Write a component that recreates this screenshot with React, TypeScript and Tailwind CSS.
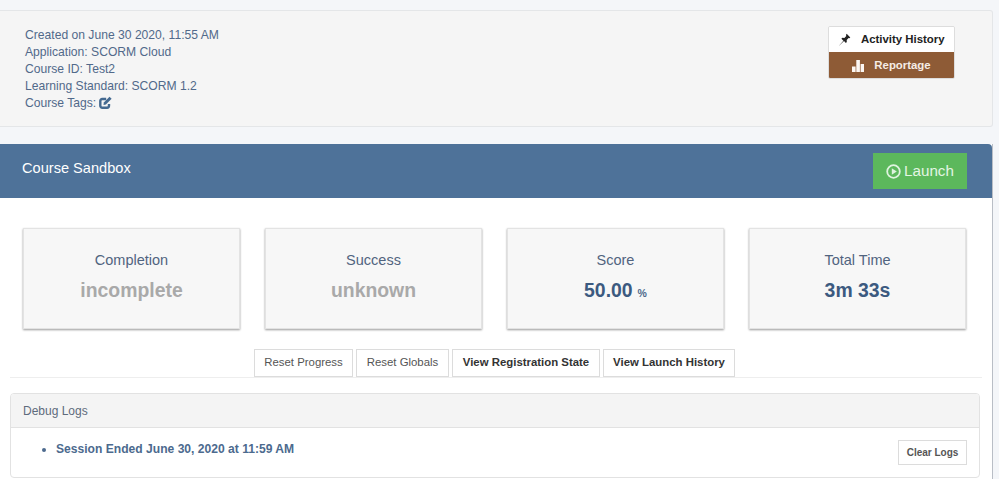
import React from "react";

const stats = [
  { label: "Completion", value: "incomplete", muted: true },
  { label: "Success", value: "unknown", muted: true },
  { label: "Score", value: "50.00", unit: "%" },
  { label: "Total Time", value: "3m 33s" },
];

const TagIcon = () => (
  <svg width="13" height="13" viewBox="0 0 13 13" fill="none" className="ml-[3px] mt-[-3px]">
    <path d="M10 8v1.800a1.900 1.900 0 0 1-1.900 1.900H3.200a1.900 1.900 0 0 1-1.900-1.900V4.900A1.900 1.900 0 0 1 3.200 3h4" stroke="#456a91" strokeWidth="2.400" />
    <path d="M4.800 6.400 10.500.7l2.100 2.100-5.700 5.800-2.400.3z" fill="#456a91" />
  </svg>
);

const PlayIcon = () => (
  <svg width="15" height="15" viewBox="0 0 15 15" fill="none">
    <circle cx="7.500" cy="7.500" r="6.300" stroke="#dff3df" strokeWidth="1.800" />
    <path d="M5.800 4.300v6.400l5-3.200z" fill="#dff3df" />
  </svg>
);

const PinIcon = () => (
  <svg width="13" height="14" viewBox="0 0 13 14" fill="#222222">
    <path d="M8.700.8 12.300 4.600l-.9.700-.8-.3-1.900 2 .1 2.100-.9.900-1.900-2L.6 13.300l4.800-5.600-2-2 .9-.9 2.100.2L8.300 3l-.3-.9z" />
  </svg>
);

const BarsIcon = () => (
  <svg width="12" height="12" viewBox="0 0 12 12" fill="#fbf6f2">
    <rect x="0" y="6.500" width="3.600" height="5.500" />
    <rect x="4.300" y="0" width="3.600" height="12" />
    <rect x="8.600" y="4" width="3.400" height="8" />
  </svg>
);

export default function App() {
  return (
    <div className="h-[479px] w-[999px] overflow-hidden bg-[#f4f6f9] pt-[10px] font-['Liberation_Sans',Arial,sans-serif]">
      <div className="flex h-[117px] w-[993px] justify-between rounded-r-[3px] border border-l-0 border-[#e4e6e8] bg-[#f5f5f5] pl-[25px] pr-[37px] pt-[16px]">
        <div className="text-[12.130px] leading-[17px] text-[#51698a]">
          <div>Created on June 30 2020, 11:55 AM</div>
          <div>Application: SCORM Cloud</div>
          <div>Course ID: Test2</div>
          <div>Learning Standard: SCORM 1.2</div>
          <div className="flex items-center">
            Course Tags:
            <TagIcon />
          </div>
        </div>
        <div className="mt-[-1px] h-[53px] w-[127px] overflow-hidden rounded-[2px] border border-[#dddddd] text-[11.400px] font-bold">
          <div className="flex h-[25px] items-center bg-white pl-[9px] text-[#222222]">
            <PinIcon />
            <span className="ml-[10px]">Activity History</span>
          </div>
          <div className="flex h-[27px] items-center justify-center bg-[#8e5b36] text-[#f5ece5]">
            <BarsIcon />
            <span className="ml-[10px]">Reportage</span>
          </div>
        </div>
      </div>

      <div className="mt-[17px] h-[335px] w-[993px] border-r border-[#b9bec6] bg-white">
        <div className="flex h-[54px] items-start justify-between rounded-tr-[4px] bg-[#4e7299] pl-[22px] pr-[25px] pt-[9px]">
          <div className="pt-[5px] text-[14.600px] text-white">Course Sandbox</div>
          <button className="flex h-[36px] w-[94px] items-center justify-center gap-[3px] bg-[#5cb85c] text-[15.200px] text-[#e3f5e3]">
            <PlayIcon />
            Launch
          </button>
        </div>

        <div className="grid grid-cols-4 gap-x-[25px] pl-[23px] pr-[26px] pt-[30px]">
          {stats.map((s) => (
            <div
              key={s.label}
              className="h-[101px] border border-[#e3e3e3] bg-[#f7f7f7] pt-[22px] text-center shadow-[0_1px_2px_rgba(0,0,0,0.4)]"
            >
              <div className="text-[14.500px] leading-[18px] text-[#51647f]">{s.label}</div>
              <div className={`mt-[9px] text-[19.400px] font-bold leading-[24px] ${s.muted ? "text-[#a9a9a9]" : "text-[#3c5a80]"}`}>
                {s.value}
                {s.unit && <span className="ml-[5px] text-[10.500px] text-[#4e6a8c]">{s.unit}</span>}
              </div>
            </div>
          ))}
        </div>

        <div className="mx-[10px] mt-[20px] flex h-[29px] justify-center gap-[3px] border-b border-[#eeeeee] pr-[3px]">
          <button className="h-[28px] w-[99px] border border-[#dcdcdc] bg-white text-[11.400px] text-[#555555]">Reset Progress</button>
          <button className="h-[28px] w-[93px] border border-[#dcdcdc] bg-white text-[11.400px] text-[#555555]">Reset Globals</button>
          <button className="h-[28px] w-[148px] border border-[#dcdcdc] bg-white text-[11.400px] font-bold text-[#333333]">View Registration State</button>
          <button className="h-[28px] w-[132px] border border-[#dcdcdc] bg-white text-[11.400px] font-bold text-[#333333]">View Launch History</button>
        </div>

        <div className="ml-[10px] mt-[15px] h-[85px] w-[970px] overflow-hidden rounded-[4px] border border-[#e2e2e2] bg-white">
          <div className="flex h-[34px] items-center border-b border-[#e2e2e2] bg-[#f4f4f4] pl-[12px] text-[12px] text-[#5e6b7c]">Debug Logs</div>
          <div className="flex items-start justify-between pl-[31px] pr-[12px]">
            <ul className="mt-[13px] list-disc pl-[14px] text-[12.100px] font-bold leading-[16px] text-[#4c6a8e]">
              <li>Session Ended June 30, 2020 at 11:59 AM</li>
            </ul>
            <button className="mt-[12px] h-[25px] w-[69px] border border-[#dcdcdc] bg-white text-[10px] font-bold text-[#555555]">Clear Logs</button>
          </div>
        </div>
      </div>
    </div>
  );
}
